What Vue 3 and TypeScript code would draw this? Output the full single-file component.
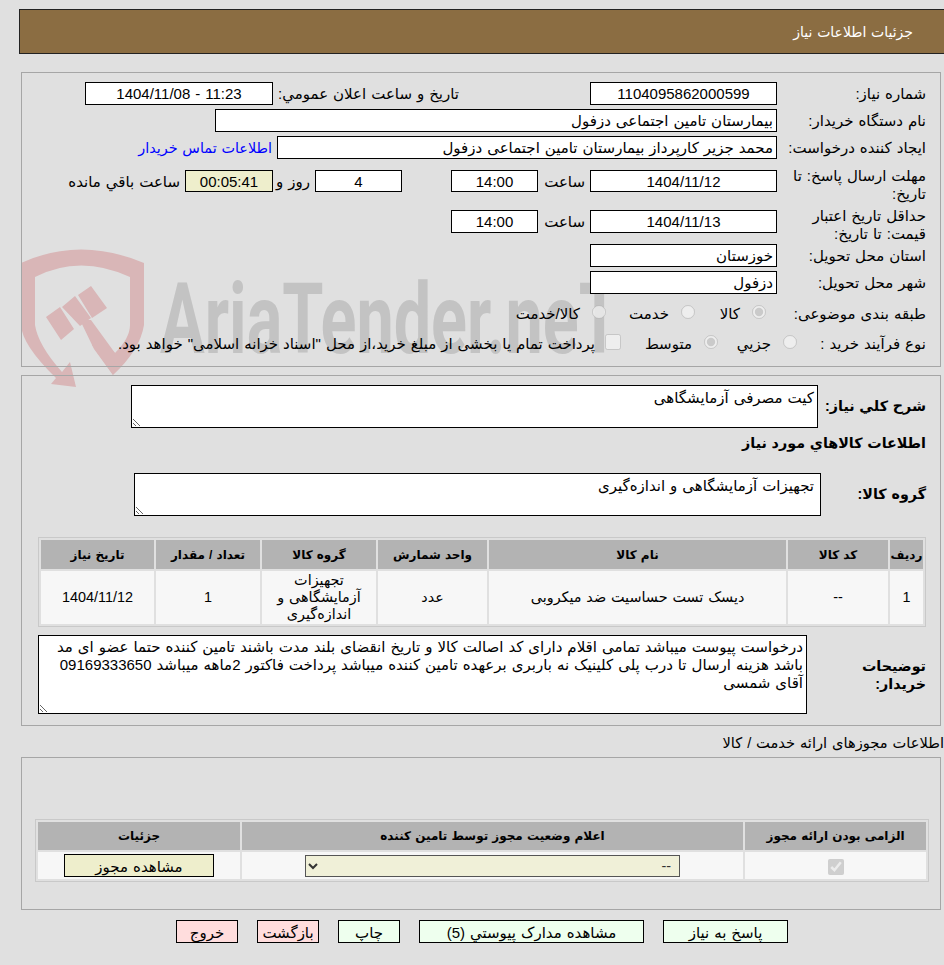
<script setup lang="ts">
const goods = [
  { id: '1', code: '--', name: 'دیسک تست حساسیت ضد میکروبی', unit: 'عدد', group: 'تجهیزات آزمایشگاهی و اندازه‌گیری', qty: '1', date: '1404/11/12' },
]
const notes = 'درخواست پیوست میباشد تمامی اقلام دارای کد اصالت کالا و تاریخ انقضای بلند مدت باشند تامین کننده حتما عضو ای مد باشد هزینه ارسال تا درب پلی کلینیک نه باربری برعهده تامین کننده میباشد پرداخت فاکتور 2ماهه میباشد 09169333650 آقای شمسی'
</script>

<template>
  <div class="page" dir="rtl">
    <svg class="mark" width="944" height="400" viewBox="0 0 944 400" aria-hidden="true">
      <path class="shield" fill-rule="evenodd" d="M21 263 Q80 236 144 263 L144 325 Q140 350 113 375 L92 345 L100 340 L115 353 Q130 338 130 325 L130 277 Q80 254 35 277 L35 325 Q38 345 62 372 L70 362 L76 387 L51 384 L56 378 Q22 345 21 325 Z" />
      <path class="shield" d="M46 317 L60 307 L74 329 L61 340 Z M62 307 L75 296 L91 318 L80 326 Z M78 295 L91 286 L107 308 L92 318 Z M80 320 L91 320 L115 353 L113 375 L94 349 Z" />
      <text class="brand" x="160" y="353" textLength="460" lengthAdjust="spacingAndGlyphs">AriaTender.neT</text>
    </svg>

    <header class="title">جزئیات اطلاعات نیاز</header>

    <section class="panel p1">
      <div class="row h27">
        <label class="lab w149">شماره نیاز:</label>
        <input class="f w187 c" readonly value="1104095862000599" />
        <label class="lab pub">تاریخ و ساعت اعلان عمومي:</label>
        <input class="f w188 c" readonly value="11:23 - 1404/11/08" />
      </div>
      <div class="row h27">
        <label class="lab w149">نام دستگاه خریدار:</label>
        <input class="f w562" readonly value="بیمارستان تامین اجتماعی دزفول" />
      </div>
      <div class="row h34">
        <label class="lab w149">ایجاد کننده درخواست:</label>
        <input class="f w500" readonly value="محمد جزیر کارپرداز بیمارستان تامین اجتماعی دزفول" />
        <a class="link">اطلاعات تماس خریدار</a>
      </div>
      <div class="row h40">
        <label class="lab w149 two">مهلت ارسال پاسخ: تا تاریخ:</label>
        <input class="f w187 h22 c" readonly value="1404/11/12" />
        <span class="hour">ساعت</span>
        <input class="f w87 h22 c" readonly value="14:00" />
        <input class="f w87 h22 c days" readonly value="4" />
        <span class="and">روز و</span>
        <input class="f w88 h22 c timer" readonly value="00:05:41" />
        <span class="left">ساعت باقي مانده</span>
      </div>
      <div class="row h34">
        <label class="lab w149 two">حداقل تاریخ اعتبار قیمت: تا تاریخ:</label>
        <input class="f w187 c" readonly value="1404/11/13" />
        <span class="hour">ساعت</span>
        <input class="f w87 c" readonly value="14:00" />
      </div>
      <div class="row h27">
        <label class="lab w149">استان محل تحویل:</label>
        <input class="f w187" readonly value="خوزستان" />
      </div>
      <div class="row h31">
        <label class="lab w149">شهر محل تحویل:</label>
        <input class="f w187" readonly value="دزفول" />
      </div>
      <div class="row opts r8">
        <label class="lab w149">طبقه بندی موضوعی:</label>
        <span class="opt w71"><input type="radio" disabled checked /><span>کالا</span></span>
        <span class="opt w89"><input type="radio" disabled /><span>خدمت</span></span>
        <span class="opt"><input type="radio" disabled /><span>کالا/خدمت</span></span>
      </div>
      <div class="row opts">
        <label class="lab w118">نوع فرآیند خرید :</label>
        <span class="opt w79"><input type="radio" disabled /><span>جزیي</span></span>
        <span class="opt w97"><input type="radio" disabled checked /><span>متوسط</span></span>
        <span class="opt pay"><input type="checkbox" disabled /><span>پرداخت تمام یا بخشی از مبلغ خرید،از محل "اسناد خزانه اسلامی" خواهد بود.</span></span>
      </div>
    </section>

    <section class="panel p2">
      <div class="row r-desc">
        <label class="lab b w108">شرح كلي نياز:</label>
        <textarea class="f ta w687" readonly>کیت مصرفی آزمایشگاهی</textarea>
      </div>
      <h3 class="goods-title">اطلاعات كالاهاي مورد نياز</h3>
      <div class="row r-group">
        <label class="lab b w105">گروه کالا:</label>
        <textarea class="f ta w687 inset" readonly>تجهیزات آزمایشگاهی و اندازه‌گیری</textarea>
      </div>
      <table class="grid g1">
        <colgroup>
          <col class="c33" /><col class="c100" /><col class="c297" /><col class="c109" /><col class="c114" /><col class="c104" /><col class="c113" />
        </colgroup>
        <thead>
          <tr><th>ردیف</th><th>کد کالا</th><th>نام کالا</th><th>واحد شمارش</th><th>گروه کالا</th><th>تعداد / مقدار</th><th>تاریخ نیاز</th></tr>
        </thead>
        <tbody>
          <tr v-for="g in goods" :key="g.id">
            <td>{{ g.id }}</td><td>{{ g.code }}</td><td>{{ g.name }}</td><td>{{ g.unit }}</td><td>{{ g.group }}</td><td>{{ g.qty }}</td><td>{{ g.date }}</td>
          </tr>
        </tbody>
      </table>
      <div class="row r-notes">
        <label class="lab b w119">توضیحات خریدار:</label>
        <textarea class="f ta notes" readonly :value="notes"></textarea>
      </div>
    </section>

    <p class="legend">اطلاعات مجوزهای ارائه خدمت / کالا</p>

    <section class="panel p3">
      <table class="grid g2">
        <colgroup><col class="c181" /><col class="c501" /><col class="c202" /></colgroup>
        <thead>
          <tr><th>الزامی بودن ارائه مجوز</th><th>اعلام وضعیت مجوز توسط تامین کننده</th><th>جزئیات</th></tr>
        </thead>
        <tbody>
          <tr>
            <td><input class="chk" type="checkbox" disabled checked /></td>
            <td><select class="sel" disabled><option>--</option></select></td>
            <td><button class="btn view" type="button">مشاهده مجوز</button></td>
          </tr>
        </tbody>
      </table>
    </section>

    <div class="actions">
      <button class="btn ok w125" type="button">پاسخ به نیاز</button>
      <button class="btn ok w225" type="button">مشاهده مدارک پیوستي (5)</button>
      <button class="btn ok w62" type="button">چاپ</button>
      <button class="btn no w62" type="button">بازگشت</button>
      <button class="btn no w62" type="button">خروج</button>
    </div>
  </div>
</template>

<style>
html, body { margin: 0; background: #e0e0e0; }
</style>

<style scoped>
.page {
  position: relative;
  width: 944px;
  height: 965px;
  overflow: hidden;
  box-sizing: border-box;
  padding-top: 9px;
  background: #e0e0e0;
  color: #000;
  font: 15px/18px "Liberation Sans", "DejaVu Sans", sans-serif;
  word-spacing: 0.8px;
}
.mark { position: absolute; left: 0; top: 0; pointer-events: none; direction: ltr; }
.shield { fill: #d9b6b7; }
.brand { fill: #c3c3c3; font: 700 98px "Roboto", sans-serif; direction: ltr; }
.title {
  position: relative;
  box-sizing: border-box;
  height: 45px;
  margin-left: 19px;
  padding: 13px 31px 0 0;
  background: #8b6d42;
  border: 1px solid #222;
  border-right: 0;
  color: #fff;
  font-size: 14px;
}
.panel {
  position: relative;
  box-sizing: border-box;
  width: 920px;
  margin-right: 3px;
  border: 1px solid #a6a6a6;
  padding-right: 14px;
}
.p1 { height: 295px; margin-top: 18px; padding-top: 9px; }
.p2 { height: 351px; margin-top: 8px; padding-top: 9px; }
.p3 { height: 153px; padding-top: 61px; padding-right: 11px; }
.row { display: flex; align-items: flex-start; }
.h27 { height: 27px; }
.h31 { height: 31px; }
.h34 { height: 34px; }
.h40 { height: 40px; }
.lab { flex: none; padding-top: 3px; }
.w149 { width: 149px; }
.w118 { width: 118px; }
.w108 { width: 108px; }
.w105 { width: 105px; }
.w119 { width: 119px; }
.two { margin-top: -6px; }
.b { font-weight: 700; font-size: 14.3px; }
.pub { width: 186px; margin-right: 131px; white-space: nowrap; }
.f {
  flex: none;
  box-sizing: border-box;
  height: 23px;
  margin: 0;
  padding: 0 3px;
  background: #fff;
  border: 1px solid #000;
  border-radius: 0;
  outline: 0;
  color: #000;
  font: inherit;
  word-spacing: inherit;
  direction: rtl;
}
.h22 { height: 22px; }
.c { text-align: center; }
.w187 { width: 187px; }
.w188 { width: 188px; }
.w562 { width: 562px; }
.w500 { width: 500px; }
.w87 { width: 87px; }
.w88 { width: 88px; }
.link { padding: 3px 5px 0 0; color: #0000ff; white-space: nowrap; font-size: 14.4px; }
.hour { width: 52px; padding: 3px 5px 0 0; box-sizing: border-box; }
.days { margin-right: 49px; }
.and { width: 42px; box-sizing: border-box; padding: 3px 5px 0 0; }
.timer { background: #eeeecc; }
.left { padding: 3px 5px 0 0; white-space: nowrap; }
.opts { align-items: center; height: 22px; margin-top: -1px; }
.r8 { margin-bottom: 9px; }
.opt { display: flex; align-items: center; flex: none; white-space: nowrap; }
.opt span { padding-top: 4px; }
.opt input { width: 14px; height: 14px; margin: 0 11px 0 12px; }
.opt input[type="checkbox"] { width: 16px; height: 16px; margin-left: 10px; }
.w71 { width: 71px; }
.w89 { width: 89px; }
.w79 { width: 79px; }
.w97 { width: 97px; }
.ta { height: 43px; padding: 3px 3px 0; resize: both; display: block; }
.w687 { width: 687px; }
.inset { padding-right: 6px; }
.r-desc { height: 43px; }
.r-desc .lab, .r-group .lab { padding-top: 12px; }
.goods-title { margin: 6px 0 0; height: 41px; font-size: 14.3px; line-height: 18px; }
.r-group { height: 43px; margin-top: -2px; }
.grid {
  border-collapse: separate;
  border-spacing: 2px;
  border: 1px solid #c9c9c9;
  table-layout: fixed;
  font-size: 14.4px;
}
.g1 { width: 888px; margin-top: 21px; }
.g2 { width: 894px; }
.c33 { width: 33px; } .c100 { width: 100px; } .c297 { width: 297px; } .c109 { width: 109px; }
.c114 { width: 114px; } .c104 { width: 104px; } .c113 { width: 113px; }
.c181 { width: 181px; } .c501 { width: 501px; } .c202 { width: 202px; }
.grid th { height: 29px; padding: 0; background: #b3b3b3; font-weight: 700; font-size: 12px; }
.g2 th { height: 28px; }
.grid td { height: 53px; padding: 0 4px; background: #f7f7f7; text-align: center; line-height: 17px; }
.g2 td { height: 27px; padding: 0; }
.r-notes { margin-top: 8px; height: 79px; }
.r-notes .lab { box-sizing: border-box; padding: 22px 0 0 40px; }
.notes { width: 769px; height: 79px; padding: 2px 3px 0 15px; }
.legend { position: relative; margin: 8px 0 5px; height: 18px; line-height: 18px; font-size: 14.67px; }
.chk { width: 16px; height: 16px; margin: 2px auto 0; display: block; }
.sel {
  display: block;
  box-sizing: border-box;
  width: 375px;
  height: 22px;
  margin: 1px auto 0;
  padding: 0 4px;
  background: #f0f0d8;
  border: 1px solid #555;
  color: #333;
  font: inherit;
  opacity: 1;
}
.btn {
  box-sizing: border-box;
  height: 23px;
  padding: 3px 0 0;
  border: 1px solid #000;
  border-radius: 0;
  color: #000;
  font: 15px/18px "Liberation Sans", "DejaVu Sans", sans-serif;
  word-spacing: inherit;
}
.view { display: block; width: 150px; margin: 0 26px 0 0; background: #eeeecc; }
.actions { display: flex; gap: 19px; margin-top: 10px; padding-right: 156px; }
.ok { background: #eeffee; }
.no { background: #ffdddd; }
.w125 { width: 125px; }
.w225 { width: 225px; }
.w62 { width: 62px; }
</style>
